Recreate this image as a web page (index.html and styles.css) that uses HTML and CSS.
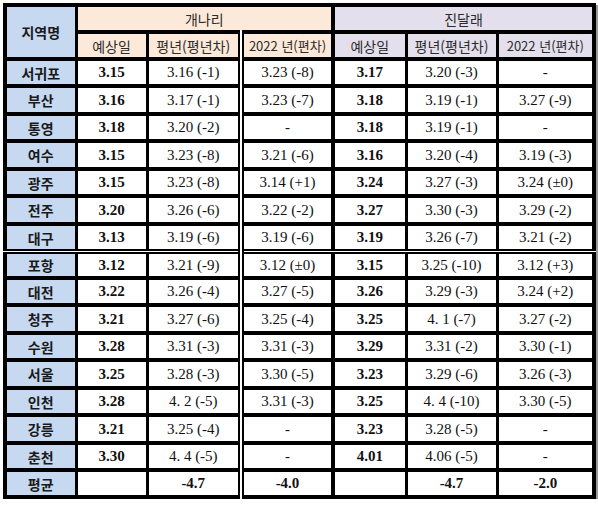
FILE: index.html
```html
<!DOCTYPE html>
<html lang="ko">
<head>
<meta charset="utf-8">
<title>개화 예상일</title>
<link rel="stylesheet" href="styles.css">
</head>
<body>
<table class="bloom">
  <colgroup>
    <col class="c-region"><col class="c-day"><col class="c-avg"><col class="c-yr">
    <col class="c-day2"><col class="c-avg2"><col class="c-yr2">
  </colgroup>
  <thead>
    <tr class="h1">
      <th rowspan="2" class="region head-region first">지역명</th>
      <th colspan="3" class="peach">개나리</th>
      <th colspan="3" class="lav sep last">진달래</th>
    </tr>
    <tr class="h2">
      <th class="peach">예상일</th>
      <th class="peach">평년(평년차)</th>
      <th class="peach dbl">2022 년(편차)</th>
      <th class="lav sep">예상일</th>
      <th class="lav">평년(평년차)</th>
      <th class="lav last">2022 년(편차)</th>
    </tr>
  </thead>
  <tbody>
    <tr><th class="region first">서귀포</th><td class="b">3.15</td><td>3.16 (-1)</td><td class="dbl">3.23 (-8)</td><td class="b sep">3.17</td><td>3.20 (-3)</td><td class="last">-</td></tr>
    <tr><th class="region first">부산</th><td class="b">3.16</td><td>3.17 (-1)</td><td class="dbl">3.23 (-7)</td><td class="b sep">3.18</td><td>3.19 (-1)</td><td class="last">3.27 (-9)</td></tr>
    <tr><th class="region first">통영</th><td class="b">3.18</td><td>3.20 (-2)</td><td class="dbl">-</td><td class="b sep">3.18</td><td>3.19 (-1)</td><td class="last">-</td></tr>
    <tr><th class="region first">여수</th><td class="b">3.15</td><td>3.23 (-8)</td><td class="dbl">3.21 (-6)</td><td class="b sep">3.16</td><td>3.20 (-4)</td><td class="last">3.19 (-3)</td></tr>
    <tr><th class="region first">광주</th><td class="b">3.15</td><td>3.23 (-8)</td><td class="dbl">3.14 (+1)</td><td class="b sep">3.24</td><td>3.27 (-3)</td><td class="last">3.24 (±0)</td></tr>
    <tr><th class="region first">전주</th><td class="b">3.20</td><td>3.26 (-6)</td><td class="dbl">3.22 (-2)</td><td class="b sep">3.27</td><td>3.30 (-3)</td><td class="last">3.29 (-2)</td></tr>
    <tr><th class="region first">대구</th><td class="b">3.13</td><td>3.19 (-6)</td><td class="dbl">3.19 (-6)</td><td class="b sep">3.19</td><td>3.26 (-7)</td><td class="last">3.21 (-2)</td></tr>
    <tr class="split"><th class="region first">포항</th><td class="b">3.12</td><td>3.21 (-9)</td><td class="dbl">3.12 (±0)</td><td class="b sep">3.15</td><td>3.25 (-10)</td><td class="last">3.12 (+3)</td></tr>
    <tr><th class="region first">대전</th><td class="b">3.22</td><td>3.26 (-4)</td><td class="dbl">3.27 (-5)</td><td class="b sep">3.26</td><td>3.29 (-3)</td><td class="last">3.24 (+2)</td></tr>
    <tr><th class="region first">청주</th><td class="b">3.21</td><td>3.27 (-6)</td><td class="dbl">3.25 (-4)</td><td class="b sep">3.25</td><td>4. 1 (-7)</td><td class="last">3.27 (-2)</td></tr>
    <tr><th class="region first">수원</th><td class="b">3.28</td><td>3.31 (-3)</td><td class="dbl">3.31 (-3)</td><td class="b sep">3.29</td><td>3.31 (-2)</td><td class="last">3.30 (-1)</td></tr>
    <tr><th class="region first">서울</th><td class="b">3.25</td><td>3.28 (-3)</td><td class="dbl">3.30 (-5)</td><td class="b sep">3.23</td><td>3.29 (-6)</td><td class="last">3.26 (-3)</td></tr>
    <tr><th class="region first">인천</th><td class="b">3.28</td><td>4. 2 (-5)</td><td class="dbl">3.31 (-3)</td><td class="b sep">3.25</td><td>4. 4 (-10)</td><td class="last">3.30 (-5)</td></tr>
    <tr><th class="region first">강릉</th><td class="b">3.21</td><td>3.25 (-4)</td><td class="dbl">-</td><td class="b sep">3.23</td><td>3.28 (-5)</td><td class="last">-</td></tr>
    <tr><th class="region first">춘천</th><td class="b">3.30</td><td>4. 4 (-5)</td><td class="dbl">-</td><td class="b sep">4.01</td><td>4.06 (-5)</td><td class="last">-</td></tr>
    <tr class="bottom"><th class="region first">평균</th><td></td><td class="b">-4.7</td><td class="b dbl">-4.0</td><td class="sep"></td><td class="b">-4.7</td><td class="b last">-2.0</td></tr>
  </tbody>
</table>
</body>
</html>
```

FILE: styles.css
```css
html, body {
  margin: 0;
  padding: 0;
  background: #ffffff;
}

body {
  padding: 3px 0 0 3px;
}

.bloom {
  border-collapse: collapse;
  table-layout: fixed;
  width: 589px;
  box-shadow: 2px 2px 0 #9a9a9a;
  font-family: "Liberation Serif", "Times New Roman", serif;
  color: #111;
}

.c-region { width: 71px; }
.c-day { width: 71px; }
.c-avg { width: 94px; }
.c-yr { width: 92px; }
.c-day2 { width: 73px; }
.c-avg2 { width: 91px; }
.c-yr2 { width: 97px; }

.bloom th,
.bloom td {
  border: 3px solid #000;
  border-top-width: 4px;
  border-bottom-width: 4px;
  padding: 0;
  height: 23px;
  text-align: center;
  vertical-align: middle;
  white-space: nowrap;
  overflow: hidden;
}

.bloom tbody tr:nth-child(even) th,
.bloom tbody tr:nth-child(even) td {
  height: 24px;
}

.bloom tbody tr.split th,
.bloom tbody tr.split td {
  height: 22px;
}

.bloom tbody tr.bottom th,
.bloom tbody tr.bottom td {
  height: 23px;
}

.bloom .first { border-left-width: 4px; }
.bloom .last { border-right-width: 4px; }

.bloom thead th {
  font-family: "Noto Sans CJK KR", "Noto Sans", sans-serif;
  font-weight: 400;
  font-size: 14px;
  color: #2b2b2b;
  line-height: 1;
}

.bloom .h2 th:nth-child(3),
.bloom .h2 th:last-child {
  font-size: 13px;
}

.bloom th.region {
  background: #c6d9f1;
  font-family: "Noto Sans CJK KR", "Noto Sans", sans-serif;
  font-weight: 700;
  font-size: 14px;
  color: #1a1a1a;
  line-height: 1;
}

.bloom thead th.head-region {
  font-weight: 700;
  color: #1a1a1a;
}

.peach { background: #fde9d9; }
.lav { background: #e4dfec; }

.bloom td {
  font-size: 15px;
  line-height: 1;
  background: #fff;
}

.bloom td.b {
  font-weight: 700;
  font-size: 15px;
}

.bloom .dbl {
  border-left: 6px double #000;
}

.bloom .sep {
  border-left-width: 4px;
}

.bloom tr.split th,
.bloom tr.split td {
  border-top: 5px double #000;
}
```
